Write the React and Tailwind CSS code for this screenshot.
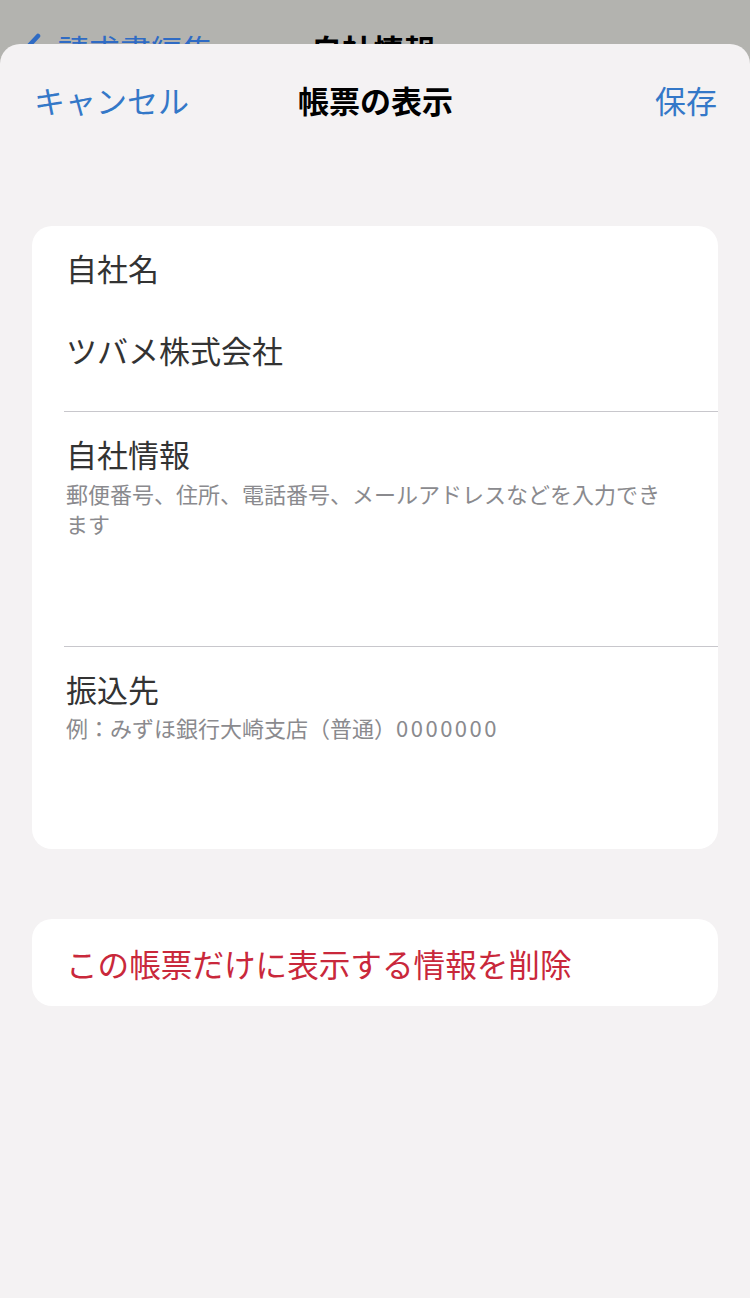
export default function App() {
  return (
    <div className="w-[750px] h-[1298px] bg-[#b3b3af] flex flex-col overflow-hidden font-['Noto_Sans_CJK_JP',sans-serif]">
      {/* background nav bar, covered by the sheet */}
      <div className="h-[44px] shrink-0 overflow-hidden">
        <div className="flex items-start pt-[31px] pl-[20px]">
          <svg width="22" height="36" viewBox="0 0 22 36" className="mt-[2px] shrink-0">
            <path d="M18 3 L4 18 L18 33" fill="none" stroke="#2f6bc4" strokeWidth="4.5" strokeLinecap="round" strokeLinejoin="round" />
          </svg>
          <span className="ml-[16px] text-[31px] leading-[36px] text-[#2f6bc4] whitespace-nowrap">請求書編集</span>
          <span className="ml-[98px] text-[31px] leading-[36px] font-bold text-black whitespace-nowrap">自社情報</span>
        </div>
      </div>

      {/* sheet */}
      <div className="flex-1 bg-[#f4f2f3] rounded-t-[20px] flex flex-col">
        <div className="h-[112px] grid grid-cols-[1fr_auto_1fr] items-center pl-[34px] pr-[33px]">
          <span className="justify-self-start text-[31px] leading-[36px] text-[#3478c8]">キャンセル</span>
          <span className="text-[31px] leading-[36px] font-bold text-black">帳票の表示</span>
          <span className="justify-self-end text-[31px] leading-[36px] text-[#3478c8]">保存</span>
        </div>

        <div className="px-[32px] pt-[70px] flex flex-col">
          <div className="bg-white rounded-[20px] flex flex-col">
            <div className="pl-[34px] pr-[48px] pt-[24px] pb-[43px]">
              <div className="text-[31px] leading-[36px] text-[#333333]">自社名</div>
              <div className="mt-[46px] text-[31px] leading-[36px] text-[#333333]">ツバメ株式会社</div>
            </div>
            <div className="ml-[32px] h-[1px] bg-[#c8c7cc]" />
            <div className="pl-[34px] pr-[48px] pt-[24px] pb-[108px]">
              <div className="text-[31px] leading-[36px] text-[#333333]">自社情報</div>
              <div className="mt-[6px] text-[22px] leading-[30px] text-[#8a8a8e]">
                郵便番号、住所、電話番号、メールアドレスなどを入力できます
              </div>
            </div>
            <div className="ml-[32px] h-[1px] bg-[#c8c7cc]" />
            <div className="pl-[34px] pr-[48px] pt-[24px] pb-[107px]">
              <div className="text-[31px] leading-[36px] text-[#333333]">振込先</div>
              <div className="mt-[5px] text-[22px] leading-[30px] text-[#8a8a8e]">
                例：みずほ銀行大崎支店（普通）<span className="tracking-[2.5px]">0000000</span>
              </div>
            </div>
          </div>

          <div className="mt-[70px] bg-white rounded-[20px] h-[87px] flex items-center px-[34px]">
            <span className="text-[31.6px] leading-[36px] text-[#c9283b]">この帳票だけに表示する情報を削除</span>
          </div>
        </div>
      </div>
    </div>
  );
}
